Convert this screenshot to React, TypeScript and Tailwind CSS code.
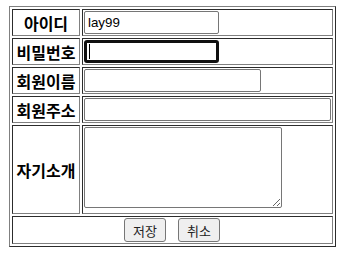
import React from 'react';

const label = "font-['Noto_Sans_CJK_KR',sans-serif] font-bold text-[16px] leading-[20px] text-black text-center align-middle";
const cell = 'p-[1px] border border-t-[#2c2c2c] border-l-[#2c2c2c] border-b-[#808080] border-r-[#808080]';
const field = "block h-[23px] px-[3px] border border-[#767676] rounded-[2px] bg-white text-[13.33px] font-['Liberation_Sans',sans-serif] text-black outline-none";

export default function App() {
  return (
    <div className="bg-white w-[343px] h-[256px] pt-[6px] pl-[9px]">
      <table className="w-[327px] table-fixed border-separate border-spacing-[2px] border border-t-[#808080] border-l-[#808080] border-b-[#2c2c2c] border-r-[#2c2c2c]">
        <tbody>
          <tr>
            <th className={`${cell} ${label} w-[68px]`}>아이디</th>
            <td className={cell}>
              <input className={`${field} w-[135px]`} defaultValue="lay99" readOnly />
            </td>
          </tr>
          <tr>
            <th className={`${cell} ${label}`}>비밀번호</th>
            <td className={cell}>
              {/* focused password field */}
              <div className="flex items-center w-[135px] h-[23px] border-[3px] border-[#101010] rounded-[3px] bg-white pl-[2px]">
                <span className="w-[1px] h-[15px] bg-black" />
              </div>
            </td>
          </tr>
          <tr>
            <th className={`${cell} ${label}`}>회원이름</th>
            <td className={cell}>
              <input className={`${field} w-[177px]`} readOnly />
            </td>
          </tr>
          <tr>
            <th className={`${cell} ${label}`}>회원주소</th>
            <td className={cell}>
              <input className={`${field} w-[247px]`} readOnly />
            </td>
          </tr>
          <tr>
            <th className={`${cell} ${label}`}>자기소개</th>
            <td className={cell}>
              <div className="h-[85px]">
                <textarea className="block w-[198px] h-[81px] border border-[#767676] rounded-[2px] bg-white outline-none" readOnly />
              </div>
            </td>
          </tr>
          <tr>
            <td colSpan={2} className={cell}>
              <div className="flex justify-center gap-[12px] pr-[1px]">
                <button className="w-[42px] h-[24px] bg-[#efefef] border border-[#767676] rounded-[3px] text-[13px] leading-none text-[#222] font-['Noto_Sans_CJK_KR',sans-serif]">
                  저장
                </button>
                <button className="w-[42px] h-[24px] bg-[#efefef] border border-[#767676] rounded-[3px] text-[13px] leading-none text-[#222] font-['Noto_Sans_CJK_KR',sans-serif]">
                  취소
                </button>
              </div>
            </td>
          </tr>
        </tbody>
      </table>
    </div>
  );
}
